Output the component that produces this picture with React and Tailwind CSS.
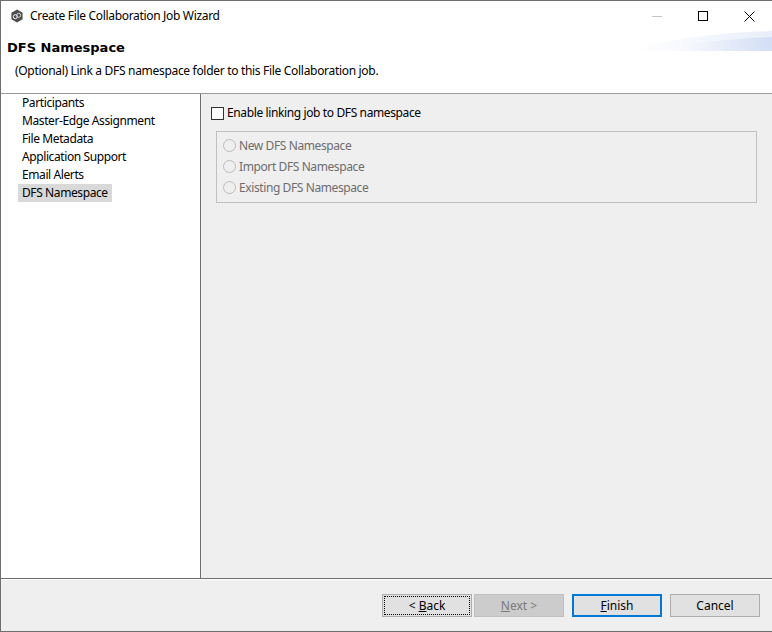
const navItems = ['Participants', 'Master-Edge Assignment', 'File Metadata', 'Application Support', 'Email Alerts', 'DFS Namespace']
const radios = ['New DFS Namespace', 'Import DFS Namespace', 'Existing DFS Namespace']

function AppIcon() {
  return (
    <svg width="14" height="14" viewBox="0 0 14 14">
      <path d="M7 0.5 L12.6 3.7 V10.3 L7 13.5 L1.4 10.3 V3.7 Z" fill="#4d4d4d" />
      <circle cx="5.3" cy="7.7" r="2" fill="none" stroke="#fff" strokeWidth="1" />
      <circle cx="8.7" cy="6.3" r="2" fill="none" stroke="#d8d8d8" strokeWidth="1" />
    </svg>
  )
}

function WindowControls() {
  return (
    <div className="flex items-center">
      <div className="w-[46px] h-[30px] flex items-center justify-center">
        <div className="w-[10px] h-px bg-[#c4c4c4]" />
      </div>
      <div className="w-[46px] h-[30px] flex items-center justify-center">
        <div className="w-[10px] h-[10px] border border-black" />
      </div>
      <div className="w-[46px] h-[30px] flex items-center justify-center">
        <svg width="11" height="11" viewBox="0 0 11 11">
          <path d="M0.5 0.5 L10.5 10.5 M10.5 0.5 L0.5 10.5" stroke="#000" strokeWidth="1" fill="none" />
        </svg>
      </div>
    </div>
  )
}

function Banner() {
  return (
    <svg className="absolute right-0 top-[30px]" width="140" height="20" viewBox="0 0 140 20">
      <defs>
        <linearGradient id="bannerFill" x1="0" x2="1" y1="0" y2="0">
          <stop offset="0" stopColor="#ffffff" />
          <stop offset="1" stopColor="#d3def5" />
        </linearGradient>
        <linearGradient id="bannerTop" x1="0" x2="1" y1="0" y2="0">
          <stop offset="0" stopColor="#ffffff" />
          <stop offset="1" stopColor="#e8eefa" />
        </linearGradient>
      </defs>
      <path d="M0 20 C30 9 80 2 140 0 V20 Z" fill="url(#bannerTop)" />
      <path d="M30 20 C60 12 100 7 140 6 V20 Z" fill="url(#bannerFill)" />
    </svg>
  )
}

function Radio({ label }) {
  return (
    <div className="flex items-center h-[21px]">
      <div className="w-[13px] h-[13px] rounded-full border border-[#bcbcbc] bg-[#efefef] mr-[3px]" />
      <span className="text-[#6d6d6d] tracking-[-0.4px]">{label}</span>
    </div>
  )
}

function FooterButton({ children, className = '' }) {
  return (
    <button className={`w-[90px] h-[23px] flex items-center justify-center border ${className}`}>
      {children}
    </button>
  )
}

export default function App() {
  return (
    <div
      className="w-[772px] h-[632px] flex flex-col overflow-hidden bg-[#efefef] border-l border-t border-b border-[#6e6e6e] text-[12px] text-black"
      style={{ fontFamily: '"Noto Sans", "Open Sans", sans-serif' }}
    >
      <div className="relative bg-white h-[92px] shrink-0 border-b border-[#9a9a9a] box-content">
        <div className="flex items-center justify-between h-[30px]">
          <div className="flex items-center pl-[9px] gap-[6px]">
            <AppIcon />
            <span className="tracking-[-0.32px]">Create File Collaboration Job Wizard</span>
          </div>
          <WindowControls />
        </div>
        <Banner />
        <div className="pl-[6px] pt-[7px] text-[13px] font-bold leading-[20px]" style={{ fontFamily: '"DejaVu Sans", sans-serif' }}>
          DFS Namespace
        </div>
        <div className="pl-[14px] pt-[5px] leading-[16px] tracking-[-0.31px]">
          (Optional) Link a DFS namespace folder to this File Collaboration job.
        </div>
      </div>

      <div className="flex h-[485px] shrink-0 border-b border-[#6e6e6e]">
        <div className="w-[200px] shrink-0 bg-white border-r border-[#6e6e6e] pl-[17px]">
          {navItems.map((item) => (
            <div
              key={item}
              className={`h-[18px] leading-[18px] px-[4px] w-fit tracking-[-0.4px] ${item === 'DFS Namespace' ? 'bg-[#d9d9d9]' : ''}`}
            >
              {item}
            </div>
          ))}
        </div>
        <div className="flex-1 pl-[10px] pt-[10px]">
          <label className="flex items-center h-[18px] mb-[9px]">
            <div className="w-[13px] h-[13px] border border-[#333] bg-white mr-[3px]" />
            <span className="tracking-[-0.38px]">Enable linking job to DFS namespace</span>
          </label>
          <div className="ml-[5px] w-[541px] h-[72px] border border-[#c0c0c0] pl-[6px] pt-[3px]">
            {radios.map((r) => (
              <Radio key={r} label={r} />
            ))}
          </div>
        </div>
      </div>

      <div className="flex-1 border-t border-white flex items-start justify-end pt-[14px] pr-[12px]">
        <FooterButton className="border-[#adadad] bg-[#e1e1e1] relative">
          <span className="absolute inset-[1px] border border-dotted border-black" />
          <span>&lt; <u>B</u>ack</span>
        </FooterButton>
        <FooterButton className="ml-[2px] border-[#bfbfbf] bg-[#cccccc] text-[#7a7a7a]">
          <span><u>N</u>ext &gt;</span>
        </FooterButton>
        <FooterButton className="ml-[8px] border-2 border-[#0078d7] bg-[#e1e1e1]">
          <span><u>F</u>inish</span>
        </FooterButton>
        <FooterButton className="ml-[8px] border-[#adadad] bg-[#e1e1e1]">
          <span>Cancel</span>
        </FooterButton>
      </div>
    </div>
  )
}
